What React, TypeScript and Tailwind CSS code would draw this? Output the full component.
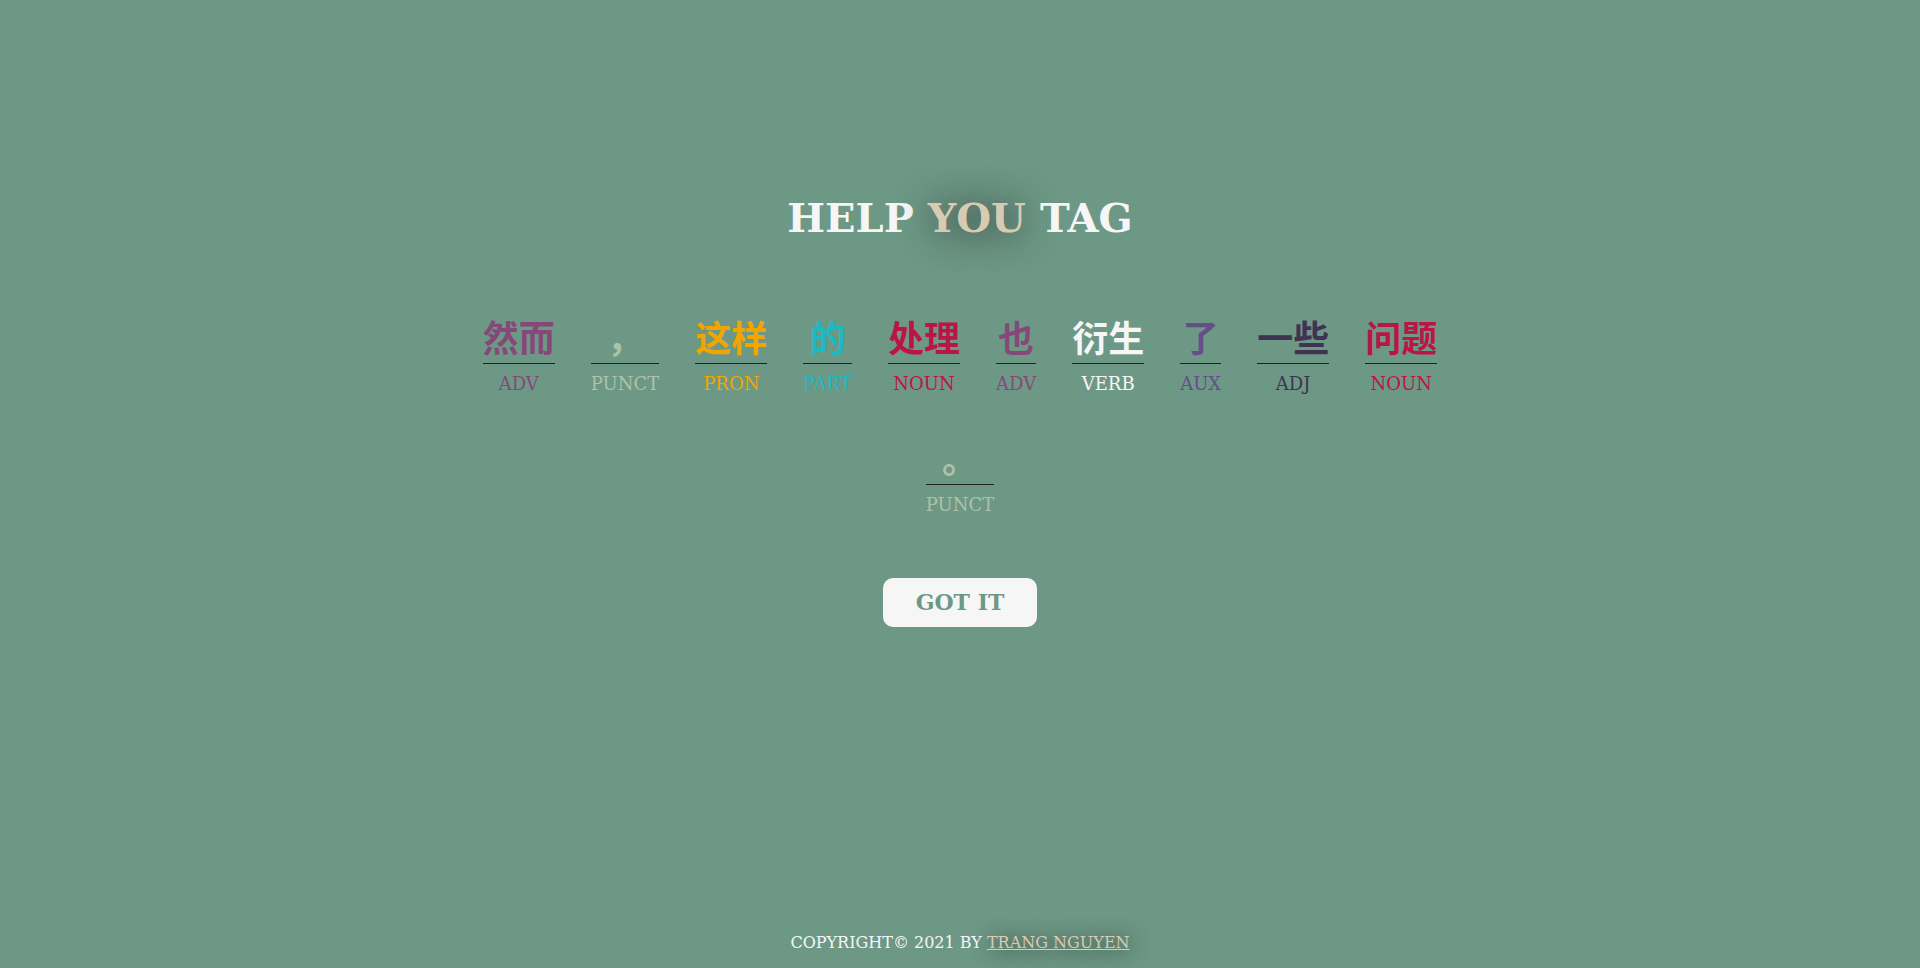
const words = [
  { text: '然而', tag: 'ADV', color: 'text-[#864879]' },
  { text: '，', tag: 'PUNCT', color: 'text-[#adc2a9]' },
  { text: '这样', tag: 'PRON', color: 'text-[#f0a500]' },
  { text: '的', tag: 'PART', color: 'text-[#1db9c3]' },
  { text: '处理', tag: 'NOUN', color: 'text-[#b91646]' },
  { text: '也', tag: 'ADV', color: 'text-[#864879]' },
  { text: '衍生', tag: 'VERB', color: 'text-[#f6f6f6]' },
  { text: '了', tag: 'AUX', color: 'text-[#664e88]' },
  { text: '一些', tag: 'ADJ', color: 'text-[#3f3351]' },
  { text: '问题', tag: 'NOUN', color: 'text-[#b91646]' },
  { text: '。', tag: 'PUNCT', color: 'text-[#adc2a9]' },
];

export default function App() {
  return (
    <div className="flex min-h-screen flex-col items-center bg-[#6d9886] px-6 font-['DejaVu_Serif','Noto_Sans_CJK_SC',serif] text-[#f6f6f6]">
      <main className="flex w-full max-w-[1008px] flex-col items-center pt-48">
        <h1 className="text-[40px] leading-[52px] font-bold">
          HELP{' '}
          <span className="text-[#d9cab3] [text-shadow:2px_2px_36px_#212121]">YOU</span> TAG
        </h1>
        <ul lang="zh-CN" className="mt-[71px] flex flex-wrap justify-center gap-x-9 gap-y-10">
          {words.map((word, i) => (
            <li key={i} className={`flex flex-col text-center ${word.color}`}>
              <span className="border-b border-[#212121] text-[36px] leading-[48px] font-bold">
                {word.text}
              </span>
              <span className="mt-2 text-[18px] leading-6">{word.tag}</span>
            </li>
          ))}
        </ul>
        <button
          type="button"
          className="mt-[61px] cursor-pointer rounded-[10px] bg-[#f6f6f6] px-[33px] text-[22px] leading-[49px] font-bold text-[#6d9886]"
        >
          GOT IT
        </button>
      </main>
      <footer className="mt-auto pt-12 pb-[15px] text-[16px] leading-5">
        COPYRIGHT© 2021 BY{' '}
        <a href="#" className="text-[#d9cab3] underline [text-shadow:2px_2px_20px_#212121]">
          TRANG NGUYEN
        </a>
      </footer>
    </div>
  );
}
